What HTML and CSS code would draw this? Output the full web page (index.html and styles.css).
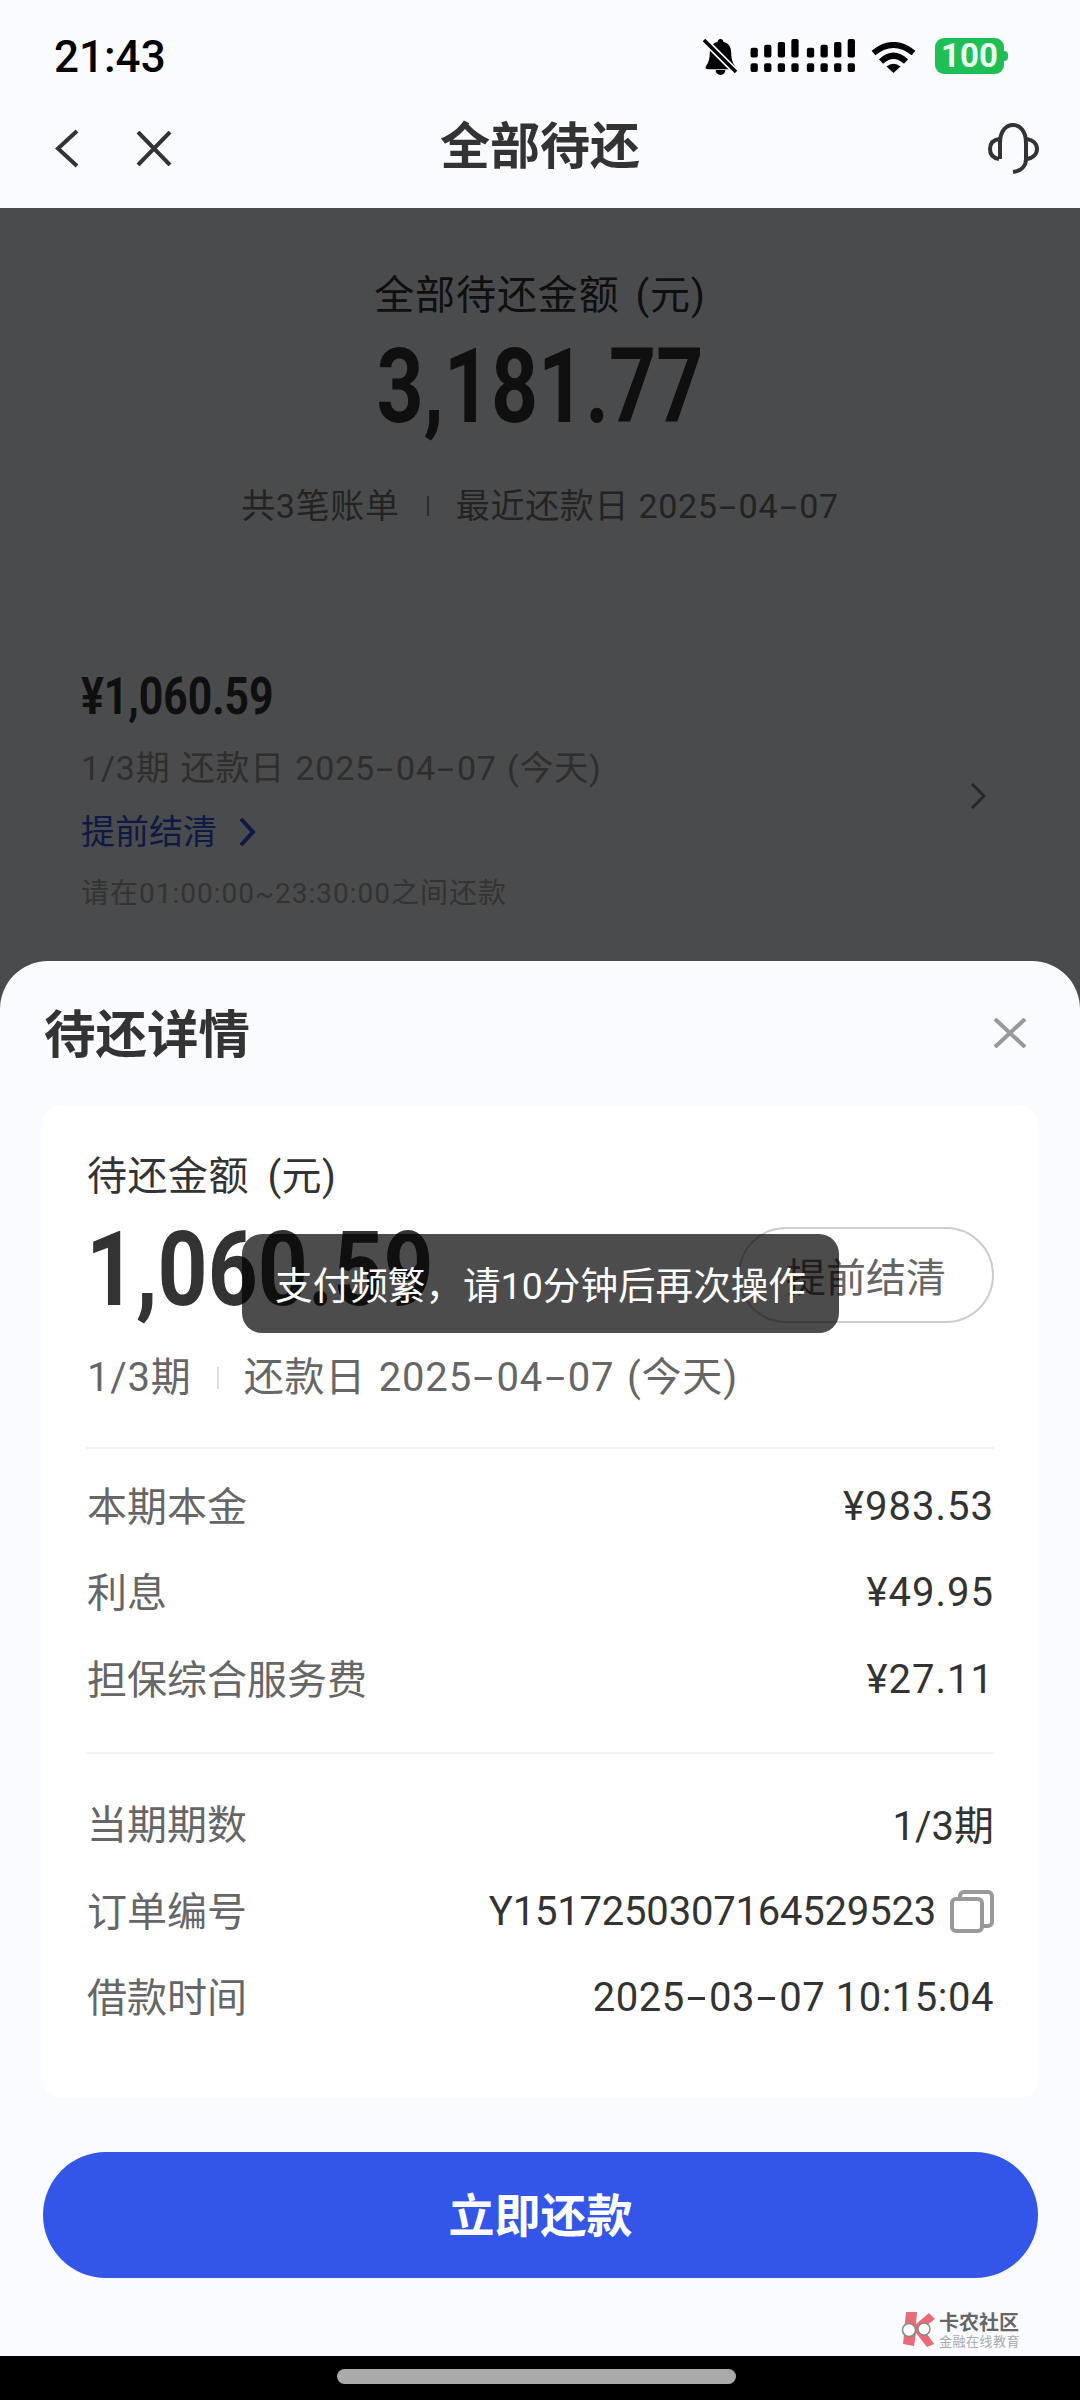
FILE: index.html
```html
<!DOCTYPE html>
<html lang="zh-CN">
<head>
<meta charset="utf-8">
<title>全部待还</title>
<link rel="stylesheet" href="styles.css">
</head>
<body>
<div class="page">
  <header class="status">
    <span class="clock">21:43</span>
    <div class="status-icons">
      <svg class="bell" viewBox="0 0 36 38"><path d="M18 1c2 0 3 2 3 3 6 1 8 6 8 11 0 6 1 10 4 14 1 2 0 3-2 3H5c-2 0-3-1-2-3 3-4 4-8 4-14 0-5 2-10 8-11 0-1 1-3 3-3zM13 33h10c0 3-2 5-5 5s-5-2-5-5z" fill="#000"/><path d="M2 3l32 32" stroke="#f9fbff" stroke-width="7"/><path d="M1 2l33 33" stroke="#000" stroke-width="3.5"/></svg>
      <svg class="signal" viewBox="0 0 108 35" fill="#000">
        <rect x="0" y="9" width="7.5" height="10" rx="2"/><rect x="14" y="6" width="7.5" height="13" rx="2"/><rect x="28" y="3" width="7.5" height="16" rx="2"/><rect x="42" y="0" width="7.5" height="19" rx="2"/>
        <rect x="58" y="9" width="7.5" height="10" rx="2"/><rect x="72" y="6" width="7.5" height="13" rx="2"/><rect x="86" y="3" width="7.5" height="16" rx="2"/><rect x="100" y="0" width="7.5" height="19" rx="2"/>
        <rect x="0" y="25" width="7.5" height="9" rx="2"/><rect x="14" y="25" width="7.5" height="9" rx="2"/><rect x="28" y="25" width="7.5" height="9" rx="2"/><rect x="42" y="25" width="7.5" height="9" rx="2"/>
        <rect x="58" y="25" width="7.5" height="9" rx="2"/><rect x="72" y="25" width="7.5" height="9" rx="2"/><rect x="86" y="25" width="7.5" height="9" rx="2"/><rect x="100" y="25" width="7.5" height="9" rx="2"/>
      </svg>
      <svg class="wifi" viewBox="0 0 45 31"><path d="M2.5 11Q22.5-5 42.5 11M10 19.500Q22.500 8 35 19.500" fill="none" stroke="#000" stroke-width="6"/><path d="M22.500 31L15.500 24.500Q22.500 19 29.500 24.500Z" fill="#000"/></svg>
      <div class="battery"><span class="battery-level">100</span><span class="battery-tip"></span></div>
    </div>
  </header>

  <nav class="nav">
    <div class="nav-left">
      <svg class="nav-back" viewBox="0 0 24 39"><path d="M22 2L3 19.500 22 37" fill="none" stroke="#333" stroke-width="4"/></svg>
      <svg class="nav-close" viewBox="0 0 36 35"><path d="M2 1l32 33M34 1L2 34" fill="none" stroke="#333" stroke-width="4"/></svg>
    </div>
    <h1 class="nav-title">全部待还</h1>
    <svg class="nav-help" viewBox="0 0 52 51" fill="none" stroke="#333" stroke-width="4"><path d="M12 36V20C12 8 18 2 25 2s13 6 13 18v16c0 7-5 12-13 13"/><path d="M11 16C5 17 2 21 2 26s3 9 9 10M39 16c6 1 10 5 10 10s-4 9-10 10"/></svg>
  </nav>

  <main class="main">
    <section class="summary">
      <div class="summary-label">全部待还金额 (元)</div>
      <div class="summary-amount">3,181.77</div>
      <div class="summary-sub"><span>共3笔账单</span><i class="tick"></i><span>最近还款日 2025<b class="dash">-</b>04<b class="dash">-</b>07</span></div>
    </section>
    <section class="bill">
      <div class="bill-body">
        <div class="bill-amount">¥1,060.59</div>
        <div class="bill-period">1/3期 还款日 2025<b class="dash">-</b>04<b class="dash">-</b>07 (今天)</div>
        <div class="bill-link">提前结清<svg class="bill-link-arrow" viewBox="0 0 18 30"><path d="M3 2l12 13L3 28" fill="none" stroke="#3355e8" stroke-width="4"/></svg></div>
        <div class="bill-note">请在01:00:00~23:30:00之间还款</div>
      </div>
      <svg class="bill-arrow" viewBox="0 0 16 26"><path d="M2 1l12 12L2 25" fill="none" stroke="#888" stroke-width="3"/></svg>
    </section>
  </main>

  <div class="scrim"></div>

  <section class="sheet">
    <div class="sheet-head">
      <h2 class="sheet-title">待还详情</h2>
      <svg class="sheet-close" viewBox="0 0 34 30"><path d="M2 1l30 28M32 1L2 29" fill="none" stroke="#999" stroke-width="4"/></svg>
    </div>
    <div class="card">
      <div class="card-label">待还金额 (元)</div>
      <div class="card-top">
        <div class="card-amount">1,060.59</div>
        <div class="settle">提前结清</div>
      </div>
      <div class="card-period"><span>1/3期</span><i class="tick tick-light"></i><span>还款日 2025<b class="dash">-</b>04<b class="dash">-</b>07 (今天)</span></div>
      <hr class="rule rule-first">
      <div class="row"><span class="row-key">本期本金</span><span class="row-val row-money">¥983.53</span></div>
      <div class="row"><span class="row-key">利息</span><span class="row-val row-money">¥49.95</span></div>
      <div class="row"><span class="row-key">担保综合服务费</span><span class="row-val row-money">¥27.11</span></div>
      <hr class="rule rule-second">
      <div class="row"><span class="row-key">当期期数</span><span class="row-val row-cjk">1/3期</span></div>
      <div class="row"><span class="row-key">订单编号</span><span class="row-val row-order"><span class="order-no">Y1517250307164529523</span><svg class="copy" viewBox="0 0 44 43" fill="none" stroke="#999" stroke-width="4"><rect x="2" y="9" width="30" height="32" rx="4"/><path d="M10 9V6a4 4 0 0 1 4-4h24a4 4 0 0 1 4 4v26a4 4 0 0 1-4 4h-6"/></svg></span></div>
      <div class="row"><span class="row-key">借款时间</span><span class="row-val row-date">2025<b class="dash">-</b>03<b class="dash">-</b>07 10:15:04</span></div>
    </div>
    <div class="pay">立即还款</div>
  </section>

  <div class="toast">支付频繁，请10分钟后再次操作</div>

  <div class="mark">
    <svg class="mark-logo" viewBox="0 0 36 35"><path d="M5 0h11l-1 12L28 1l6 6-12 9 11 16-7 3-11-14-2 13-11-2z" fill="#ea6b78"/><circle cx="8" cy="18" r="6.500" fill="#fff" stroke="#888" stroke-width="1.500"/><circle cx="23" cy="17" r="6" fill="#fff" stroke="#888" stroke-width="1.500"/></svg>
    <div class="mark-text">
      <span class="mark-name">卡农社区</span>
      <span class="mark-sub">金融在线教育</span>
    </div>
  </div>

  <footer class="homebar"><span class="home-pill"></span></footer>
</div>
</body>
</html>
```

FILE: styles.css
```css
* { box-sizing: border-box; }
html, body { margin: 0; padding: 0; }
body { font-family: Roboto, "Noto Sans CJK SC", sans-serif; color: #333; }
h1, h2, hr { margin: 0; }
i, b { font-style: normal; font-weight: inherit; }

.page { position: relative; width: 1080px; height: 2400px; overflow: hidden; background: #f9fbff; display: flex; flex-direction: column; }

.status { height: 112px; flex: none; display: flex; justify-content: space-between; align-items: flex-start; padding: 31px 76px 0 54px; }
.clock { font-size: 44px; line-height: 52px; font-weight: 500; color: #000; }
.status-icons { display: flex; align-items: flex-start; padding-top: 7px; }
.bell { width: 35px; height: 37px; }
.signal { width: 108px; height: 34px; margin: 1px 0 0 11px; }
.wifi { width: 45px; height: 31px; margin: 4px 0 0 14px; }
.battery { position: relative; width: 69px; height: 36px; margin-left: 19px; background: #1fbf55; border-radius: 9px; text-align: center; }
.battery-level { font-size: 33px; line-height: 36px; font-weight: 700; color: #eafff0; }
.battery-tip { position: absolute; left: 69px; top: 13px; width: 4px; height: 10px; background: #1fbf55; border-radius: 0 4px 4px 0; }

.nav { position: relative; height: 72px; flex: none; display: flex; justify-content: space-between; align-items: center; padding: 0 40px 0 55px; }
.nav-left { display: flex; align-items: center; gap: 57px; }
.nav-back { width: 24px; height: 39px; }
.nav-close { width: 36px; height: 35px; }
.nav-title { position: absolute; left: 0; right: 0; top: 0; text-align: center; font-size: 50px; line-height: 70px; font-weight: 700; color: #333; }
.nav-help { width: 52px; height: 51px; }

.main { flex: 1; }
.summary { display: flex; flex-direction: column; align-items: center; padding-top: 84px; }
.summary-label { font-size: 40px; line-height: 56px; letter-spacing: .9px; word-spacing: 5px; color: #333; }
.summary-amount { margin-top: 3px; font-weight: 700; font-size: 104px; line-height: 120px; color: #333; transform: scaleX(.79); }
.summary-sub { margin-top: 34px; display: flex; align-items: center; gap: 27px; font-size: 34px; line-height: 50px; letter-spacing: .7px; color: #777; }
.tick { width: 2px; height: 20px; background: #999; }
.tick-light { height: 22px; background: #ddd; }
.dash { display: inline-block; transform: scaleX(1.8); margin: 0 .16em; }

.bill { display: flex; justify-content: space-between; align-items: center; margin-top: 136px; padding: 0 94px 0 81px; }
.bill-amount { font-weight: 700; font-size: 52px; line-height: 60px; color: #333; transform: scaleX(.82); transform-origin: left center; }
.bill-period { margin-top: 16px; font-size: 34px; line-height: 50px; word-spacing: 1px; letter-spacing: .8px; color: #999; }
.bill-link { margin-top: 14px; display: flex; align-items: center; gap: 21px; font-size: 34px; line-height: 50px; color: #3355e8; }
.bill-link-arrow { width: 18px; height: 30px; }
.bill-note { margin-top: 17px; font-size: 28px; line-height: 40px; letter-spacing: 1px; color: #aaa; }
.bill-arrow { width: 16px; height: 26px; margin-top: 10px; }

.scrim { position: absolute; left: 0; right: 0; top: 208px; bottom: 0; background: rgba(0, 0, 0, .7); }

.sheet { position: absolute; left: 0; right: 0; top: 961px; bottom: 44px; background: #f9fbff; border-radius: 48px 48px 0 0; padding: 40px 42px 0 43px; }
.sheet-head { display: flex; justify-content: space-between; align-items: center; height: 64px; margin-bottom: 40px; padding: 0 11px 0 1px; }
.sheet-title { font-size: 51.500px; line-height: 64px; padding-top: 5px; font-weight: 700; color: #333; }
.sheet-close { width: 34px; height: 30px; }

.card { height: 993px; background: #fff; border-radius: 18px; padding: 44px 44px 0 46px; }
.card-label { margin-left: -2px; font-size: 40px; line-height: 56px; letter-spacing: .5px; word-spacing: 8px; color: #333; }
.card-top { margin-top: 22px; display: flex; justify-content: space-between; align-items: flex-start; }
.card-amount { font-weight: 700; font-size: 104px; line-height: 86px; color: #333; transform: scaleX(.84); transform-origin: left center; margin-left: -3px; }
.settle { width: 256px; height: 96px; border: 2px solid #ccc; border-radius: 48px; display: flex; align-items: center; justify-content: center; font-size: 40px; color: #666; }
.card-period { margin-left: -2px; margin-top: 30px; display: flex; align-items: center; gap: 25px; font-size: 40px; line-height: 50px; letter-spacing: .8px; word-spacing: 2px; color: #666; }

.rule { border: 0; height: 2px; background: #f3f3f5; margin-left: -3px; }
.rule-first { margin-top: 44px; margin-bottom: 15px; }
.rule-second { margin-top: 28px; margin-bottom: 29px; }

.row { height: 86.500px; display: flex; justify-content: space-between; align-items: center; font-size: 40px; }
.row-key { margin-left: -2px; margin-top: -7px; color: #666; }
.row-val { margin-top: -2px; color: #333; }
.row-money { letter-spacing: 1px; }
.row-cjk { margin-top: -6px; }
.row-order { display: flex; align-items: center; gap: 14px; }
.order-no { letter-spacing: -.2px; }
.row-date { letter-spacing: .5px; }
.copy { width: 44px; height: 43px; }

.pay { margin-top: 54px; height: 126px; border-radius: 63px; background: #3355e8; color: #fff; font-size: 46px; font-weight: 700; display: flex; align-items: center; justify-content: center; padding-bottom: 7px; }

.toast { position: absolute; left: 242px; top: 1234px; width: 597px; height: 99px; border-radius: 20px; background: rgba(0, 0, 0, .7); color: #fff; font-size: 37.600px; line-height: 104px; text-align: center; }

.mark { position: absolute; left: 901px; top: 2312px; display: flex; gap: 2px; }
.mark-logo { width: 36px; height: 35px; }
.mark-text { display: flex; flex-direction: column; }
.mark-name { font-size: 20px; line-height: 22px; font-weight: 700; color: #666; }
.mark-sub { font-size: 13px; line-height: 15px; letter-spacing: .5px; color: #aaa; }

.homebar { position: absolute; left: 0; right: 0; bottom: 0; height: 44px; background: #000; display: flex; justify-content: center; padding-top: 13px; }
.home-pill { width: 399px; height: 15px; border-radius: 8px; background: #aaa; margin-right: 7px; }
```
